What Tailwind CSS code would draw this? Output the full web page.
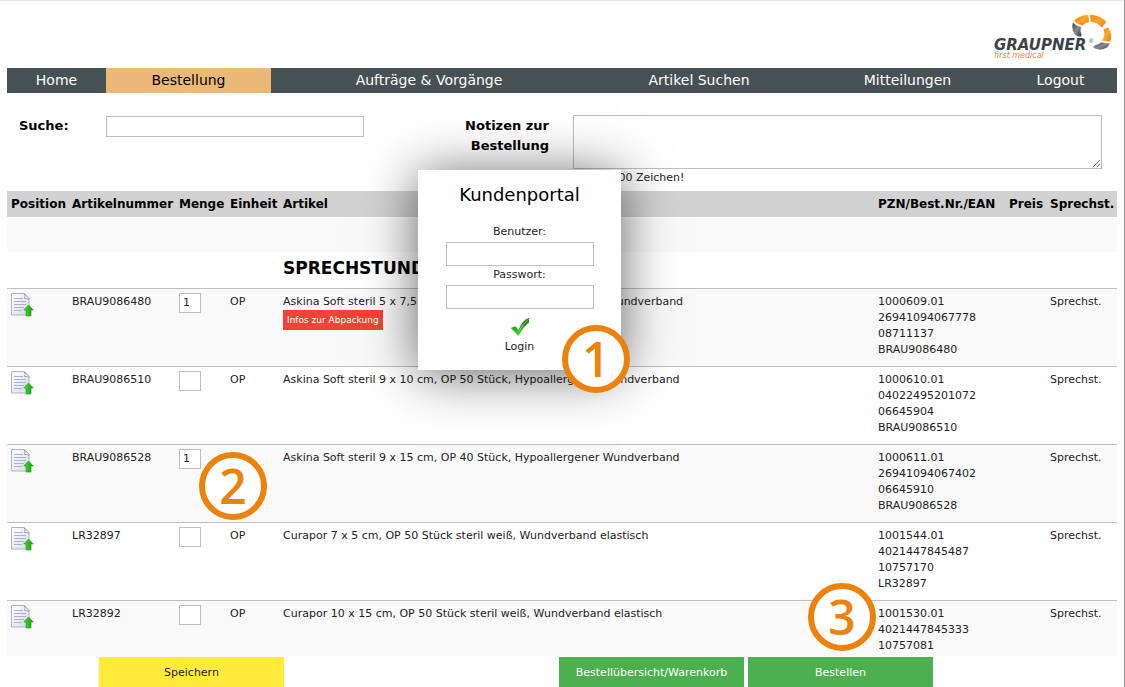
<!DOCTYPE html>
<html lang="de">
<head>
<meta charset="utf-8">
<meta name="viewport" content="width=device-width, initial-scale=1">
<title>Kundenportal – Bestellung</title>
<script src="https://cdn.jsdelivr.net/npm/@tailwindcss/browser@4"></script>
</head>
<body class="relative flex h-screen flex-col overflow-hidden border-t border-r border-t-[#e4e4e4] border-r-[#8c8c8c] bg-white pr-[7px] pl-[7px] font-['DejaVu_Sans',sans-serif] text-[11px] leading-4 text-[#222]">

<svg width="0" height="0" class="absolute" aria-hidden="true">
  <defs>
    <linearGradient id="paper" x1="0" y1="0" x2="1" y2="1"><stop offset="0" stop-color="#fff"/><stop offset="1" stop-color="#d6dbea"/></linearGradient>
    <linearGradient id="arrow" x1="0" y1="0" x2="1" y2="0"><stop offset="0" stop-color="#4fd93a"/><stop offset="1" stop-color="#149a10"/></linearGradient>
    <linearGradient id="tick" x1="0" y1="0" x2="0" y2="1"><stop offset="0" stop-color="#1c6b1c"/><stop offset=".5" stop-color="#2f9a2a"/><stop offset="1" stop-color="#3fe02a"/></linearGradient>
    <linearGradient id="orange" x1="0" y1="0" x2="1" y2="1"><stop offset="0" stop-color="#ee820c"/><stop offset=".5" stop-color="#fca62c"/><stop offset="1" stop-color="#ea7c08"/></linearGradient>
    <linearGradient id="slate" x1="0" y1="0" x2="1" y2="1"><stop offset="0" stop-color="#3c4347"/><stop offset=".5" stop-color="#858b8f"/><stop offset="1" stop-color="#2f363a"/></linearGradient>
    <symbol id="doc" viewBox="0 0 24 26">
      <path d="M1.500 1.500h12.500l5 5v16.500h-17.500z" fill="url(#paper)" stroke="#b0b4bd"/>
      <path d="M14 1.500q2 2.500.5 5 2.500-.5 4.500 1v-1z" fill="#fff" stroke="#8b8f99" stroke-width=".8"/>
      <path d="M4 6.500h9M4 9.500h12M4 12.500h12M4 15.500h10M4 18.500h8" stroke="#a9b2cb"/>
      <path d="M18.500 13l4.800 5h-2.300v6h-5v-6h-2.300z" fill="url(#arrow)" stroke="#2aa51f" stroke-width=".7"/>
    </symbol>
  </defs>
</svg>

<header class="flex h-[67px] shrink-0 items-end justify-end pr-[3px] pb-2">
  <svg viewBox="0 0 120 48" class="h-12 w-[120px]" role="img" aria-label="Graupner first medical">
    <g stroke="#fff" stroke-width=".7">
      <path d="M79.500 9Q84 3 94.500 2.500l1 7.500q-4 .5-7 4-5-1-9-5z" fill="url(#orange)"/>
      <path d="M95.500 2.500Q107 2.500 112.500 10l-4.500 6q-4-5-11.500-6z" fill="url(#orange)"/>
      <path d="M109 17l5.500-2q5 8 2 15l-9-1q2-3 2.500-6 0-3-1-6z" fill="url(#orange)"/>
      <path d="M78.500 10q4 4 9 5-1.500 4 .5 8l-1 2q-6 0-8-5-2-5-.5-10z" fill="url(#slate)"/>
      <path d="M107 30q4.500 1 9.500 1-3 7-11 7-4 0-7-3l3.500-2.500q3-.5 5-2.500z" fill="url(#slate)"/>
    </g>
    <text x="0" y="38" font-family="DejaVu Sans" font-size="15" font-weight="bold" font-style="italic" fill="#3a4246">GRAUPNER</text>
    <text x="95" y="31" font-family="Liberation Sans" font-size="6" fill="#3a4246">®</text>
    <text x="0" y="46" font-family="DejaVu Sans" font-size="8" font-style="italic" fill="#e8861a">first medical</text>
  </svg>
</header>

<nav class="grid shrink-0 grid-cols-[99fr_165fr_316fr_224fr_193fr_113fr] bg-[#465153] text-center text-[14px] leading-[25px] text-white">
  <a href="#">Home</a>
  <a href="#" class="bg-[#ecb877] text-black" aria-current="page">Bestellung</a>
  <a href="#">Aufträge &amp; Vorgänge</a>
  <a href="#">Artikel Suchen</a>
  <a href="#">Mitteilungen</a>
  <a href="#">Logout</a>
</nav>

<form class="flex h-[98px] shrink-0 items-start pt-[22px] pr-[15px]">
  <label for="suche" class="w-[99px] shrink-0 pt-px pl-3 text-[13px] leading-5 font-bold text-black">Suche:</label>
  <input id="suche" type="text" class="mt-px h-[21px] w-[258px] shrink-0 border border-[#bdbdbd] bg-white px-1">
  <label for="notiz" class="w-[185px] shrink-0 pt-px pl-20 text-right text-[13px] leading-5 font-bold text-black">Notizen zur Bestellung</label>
  <div class="ml-6 flex-1">
    <textarea id="notiz" class="block h-[54px] w-full resize border border-[#bdbdbd] bg-white"></textarea>
    <p class="mt-px">Noch 1000 Zeichen!</p>
  </div>
</form>

<main class="min-h-0 flex-1 overflow-hidden">
  <table class="w-full table-fixed border-collapse text-left [&_td]:pl-1 [&_td]:align-top [&_th]:pl-1">
    <colgroup>
      <col class="w-[61px]"><col class="w-[107px]"><col class="w-[51px]"><col class="w-[53px]"><col><col class="w-[131px]"><col class="w-[41px]"><col class="w-[71px]">
    </colgroup>
    <thead>
      <tr class="h-[26px] border-b border-white bg-[#d2d2d2] text-xs whitespace-nowrap text-black">
        <th>Position</th><th>Artikelnummer</th><th>Menge</th><th>Einheit</th><th>Artikel</th><th>PZN/Best.Nr./EAN</th><th>Preis</th><th>Sprechst.</th>
      </tr>
    </thead>
    <tbody>
      <tr class="h-[35px] bg-[#f9f9f9]"><td colspan="8"></td></tr>
      <tr class="h-9 text-[17px] leading-8 font-bold text-black"><td colspan="4"></td><td colspan="4">SPRECHSTUNDENBEDARF</td></tr>

      <tr class="h-[78px] border-t border-[#bfbfbf] bg-[#f9f9f9]">
        <td class="pt-[3px]"><svg class="-ml-px h-[26px] w-6" aria-hidden="true"><use href="#doc"/></svg></td>
        <td class="pt-[5px]">BRAU9086480</td>
        <td class="pt-1"><input type="text" value="1" aria-label="Menge BRAU9086480" class="block h-5 w-[22px] border border-[#bdbdbd] bg-white px-[3px]"></td>
        <td class="pt-[5px]">OP</td>
        <td class="pt-[5px]">Askina Soft steril 5 x 7,5 cm, OP 50 Stück, Hypoallergener Wundverband<br><a href="#" class="inline-block bg-[#f44336] px-1 text-[9px] leading-5 text-white">Infos zur Abpackung</a></td>
        <td class="pt-[5px]">1000609.01<br>26941094067778<br>08711137<br>BRAU9086480</td>
        <td></td>
        <td class="pt-[5px]">Sprechst.</td>
      </tr>
      <tr class="h-[78px] border-t border-[#bfbfbf]">
        <td class="pt-[3px]"><svg class="-ml-px h-[26px] w-6" aria-hidden="true"><use href="#doc"/></svg></td>
        <td class="pt-[5px]">BRAU9086510</td>
        <td class="pt-1"><input type="text" aria-label="Menge BRAU9086510" class="block h-5 w-[22px] border border-[#bdbdbd] bg-white px-[3px]"></td>
        <td class="pt-[5px]">OP</td>
        <td class="pt-[5px]">Askina Soft steril 9 x 10 cm, OP 50 Stück, Hypoallergener Wundverband</td>
        <td class="pt-[5px]">1000610.01<br>04022495201072<br>06645904<br>BRAU9086510</td>
        <td></td>
        <td class="pt-[5px]">Sprechst.</td>
      </tr>
      <tr class="h-[78px] border-t border-[#bfbfbf] bg-[#f9f9f9]">
        <td class="pt-[3px]"><svg class="-ml-px h-[26px] w-6" aria-hidden="true"><use href="#doc"/></svg></td>
        <td class="pt-[5px]">BRAU9086528</td>
        <td class="pt-1"><input type="text" value="1" aria-label="Menge BRAU9086528" class="block h-5 w-[22px] border border-[#bdbdbd] bg-white px-[3px]"></td>
        <td></td>
        <td class="pt-[5px]">Askina Soft steril 9 x 15 cm, OP 40 Stück, Hypoallergener Wundverband</td>
        <td class="pt-[5px]">1000611.01<br>26941094067402<br>06645910<br>BRAU9086528</td>
        <td></td>
        <td class="pt-[5px]">Sprechst.</td>
      </tr>
      <tr class="h-[78px] border-t border-[#bfbfbf]">
        <td class="pt-[3px]"><svg class="-ml-px h-[26px] w-6" aria-hidden="true"><use href="#doc"/></svg></td>
        <td class="pt-[5px]">LR32897</td>
        <td class="pt-1"><input type="text" aria-label="Menge LR32897" class="block h-5 w-[22px] border border-[#bdbdbd] bg-white px-[3px]"></td>
        <td class="pt-[5px]">OP</td>
        <td class="pt-[5px]">Curapor 7 x 5 cm, OP 50 Stück steril weiß, Wundverband elastisch</td>
        <td class="pt-[5px]">1001544.01<br>4021447845487<br>10757170<br>LR32897</td>
        <td></td>
        <td class="pt-[5px]">Sprechst.</td>
      </tr>
      <tr class="h-[78px] border-t border-[#bfbfbf] bg-[#f9f9f9]">
        <td class="pt-[3px]"><svg class="-ml-px h-[26px] w-6" aria-hidden="true"><use href="#doc"/></svg></td>
        <td class="pt-[5px]">LR32892</td>
        <td class="pt-1"><input type="text" aria-label="Menge LR32892" class="block h-5 w-[22px] border border-[#bdbdbd] bg-white px-[3px]"></td>
        <td class="pt-[5px]">OP</td>
        <td class="pt-[5px]">Curapor 10 x 15 cm, OP 50 Stück steril weiß, Wundverband elastisch</td>
        <td class="pt-[5px]">1001530.01<br>4021447845333<br>10757081</td>
        <td></td>
        <td class="pt-[5px]">Sprechst.</td>
      </tr>
    </tbody>
  </table>
</main>

<footer class="mt-px flex h-[30px] shrink-0 pr-[184px] pl-[92px]">
  <button type="button" class="w-[185px] bg-[#ffeb3b] pt-0.5 text-[#222]">Speichern</button>
  <button type="button" class="ml-auto w-[185px] bg-[#4caf50] pt-0.5 text-white">Bestellübersicht/Warenkorb</button>
  <button type="button" class="ml-1 w-[185px] bg-[#4caf50] pt-0.5 text-white">Bestellen</button>
</footer>

<form class="absolute top-[169px] left-[418px] flex h-[200px] w-[203px] flex-col items-center bg-white pt-[13px] shadow-[0_4px_50px_rgba(0,0,0,0.6)]" aria-labelledby="portal">
  <h2 id="portal" class="text-[18px] leading-6 text-black">Kundenportal</h2>
  <label for="benutzer" class="mt-[17px]">Benutzer:</label>
  <input id="benutzer" type="text" class="mt-0.5 h-6 w-[148px] border border-[#bdbdbd] px-1">
  <label for="passwort" class="mt-px">Passwort:</label>
  <input id="passwort" type="password" class="mt-0.5 h-6 w-[148px] border border-[#bdbdbd] px-1">
  <button type="submit" class="mt-2 flex flex-col items-center">
    <svg viewBox="0 0 20 20" class="h-5 w-5" aria-hidden="true"><path d="M.8 11l4.700-1.800 3 3.800Q12 3 19.500.8q-1 2.500-.5 4.700-6 4.500-10.500 13.500z" fill="url(#tick)"/><path d="M9 14.500Q13 6.500 18.500 2" fill="none" stroke="#8fdc80" stroke-width=".8"/></svg>
    <span class="mt-0.5">Login</span>
  </button>
</form>

<span class="absolute top-[324px] left-[562px] flex size-[68px] items-center justify-center rounded-full border-6 border-[#ec8209] bg-white font-['Open_Sans'] text-5xl font-semibold text-[#ec8209]">1</span>
<span class="absolute top-[451px] left-[199px] flex size-[68px] items-center justify-center rounded-full border-6 border-[#ec8209] bg-white font-['Open_Sans'] text-5xl font-semibold text-[#ec8209]">2</span>
<span class="absolute top-[582px] left-[808px] flex size-[68px] items-center justify-center rounded-full border-6 border-[#ec8209] bg-white font-['Open_Sans'] text-5xl font-semibold text-[#ec8209]">3</span>
</body>
</html>
